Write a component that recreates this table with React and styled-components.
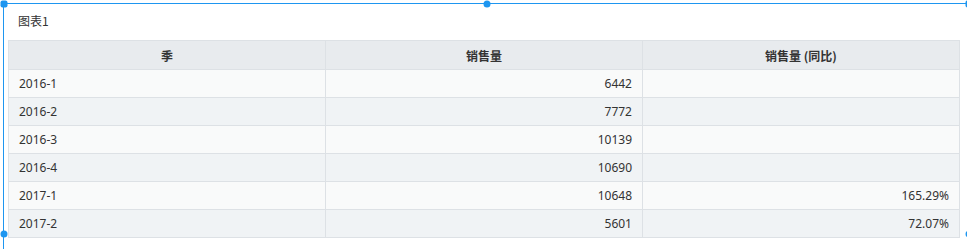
import React from "react";
import styled, { createGlobalStyle } from "styled-components";

const GlobalStyle = createGlobalStyle`
  html, body {
    margin: 0;
    padding: 0;
    background: #fff;
    overflow: hidden;
  }
  body {
    font-family: "Noto Sans", "Noto Sans CJK SC", sans-serif;
    color: #333;
  }
`;

const Page = styled.div`
  padding: 3px 0 0 3px;
`;

// selected chart widget, its frame runs on past the bottom of the view
const Frame = styled.div`
  position: relative;
  display: flex;
  flex-direction: column;
  width: 959px;
  height: 246px;
  border: 1px solid #1e96f0;
  border-bottom: none;
  padding: 0 2px 0 4px;
`;

const Handle = styled.span`
  position: absolute;
  width: 7px;
  height: 7px;
  border-radius: ${(p) => (p.$corner ? "2px" : "50%")};
  background: #1e96f0;
  left: ${(p) => p.$x};
  top: ${(p) => p.$y};
  transform: translate(-50%, -50%);
`;

const Title = styled.div`
  height: 36px;
  line-height: 33px;
  padding-left: 10px;
  font-size: 12px;
  font-family: "Noto Sans CJK SC", "Noto Sans", sans-serif;
  color: #333;
`;

const Table = styled.table`
  width: 952px;
  border-collapse: collapse;
  table-layout: fixed;
  font-size: 12px;
  border: 1px solid #dde1e5;
`;

const Th = styled.th`
  height: 28px;
  padding: 0 10px;
  background: #e8ebee;
  border: 1px solid #dde1e5;
  font-weight: 700;
  font-family: "Noto Sans CJK SC", "Noto Sans", sans-serif;
  text-align: center;
  color: #333;
`;

const Tr = styled.tr`
  background: ${(p) => (p.$even ? "#f0f3f5" : "#f9fafa")};
`;

const Td = styled.td`
  height: 27px;
  padding: 0 10px;
  border: 1px solid #dde1e5;
  text-align: ${(p) => (p.$num ? "right" : "left")};
  color: #333;
`;

const rows = [
  ["2016-1", "6442", ""],
  ["2016-2", "7772", ""],
  ["2016-3", "10139", ""],
  ["2016-4", "10690", ""],
  ["2017-1", "10648", "165.29%"],
  ["2017-2", "5601", "72.07%"],
];

export default function App() {
  return (
    <>
      <GlobalStyle />
      <Page>
        <Frame>
          <Handle $corner $x="0px" $y="0px" />
          <Handle $x="50%" $y="0px" />
          <Handle $corner $x="100%" $y="0px" />
          <Handle $x="0px" $y="230px" />
          <Handle $x="100%" $y="230px" />
          <Title>图表1</Title>
          <Table>
            <thead>
              <tr>
                <Th>季</Th>
                <Th>销售量</Th>
                <Th>销售量 (同比)</Th>
              </tr>
            </thead>
            <tbody>
              {rows.map((r, i) => (
                <Tr key={r[0]} $even={i % 2 === 1}>
                  <Td>{r[0]}</Td>
                  <Td $num>{r[1]}</Td>
                  <Td $num>{r[2]}</Td>
                </Tr>
              ))}
            </tbody>
          </Table>
        </Frame>
      </Page>
    </>
  );
}
